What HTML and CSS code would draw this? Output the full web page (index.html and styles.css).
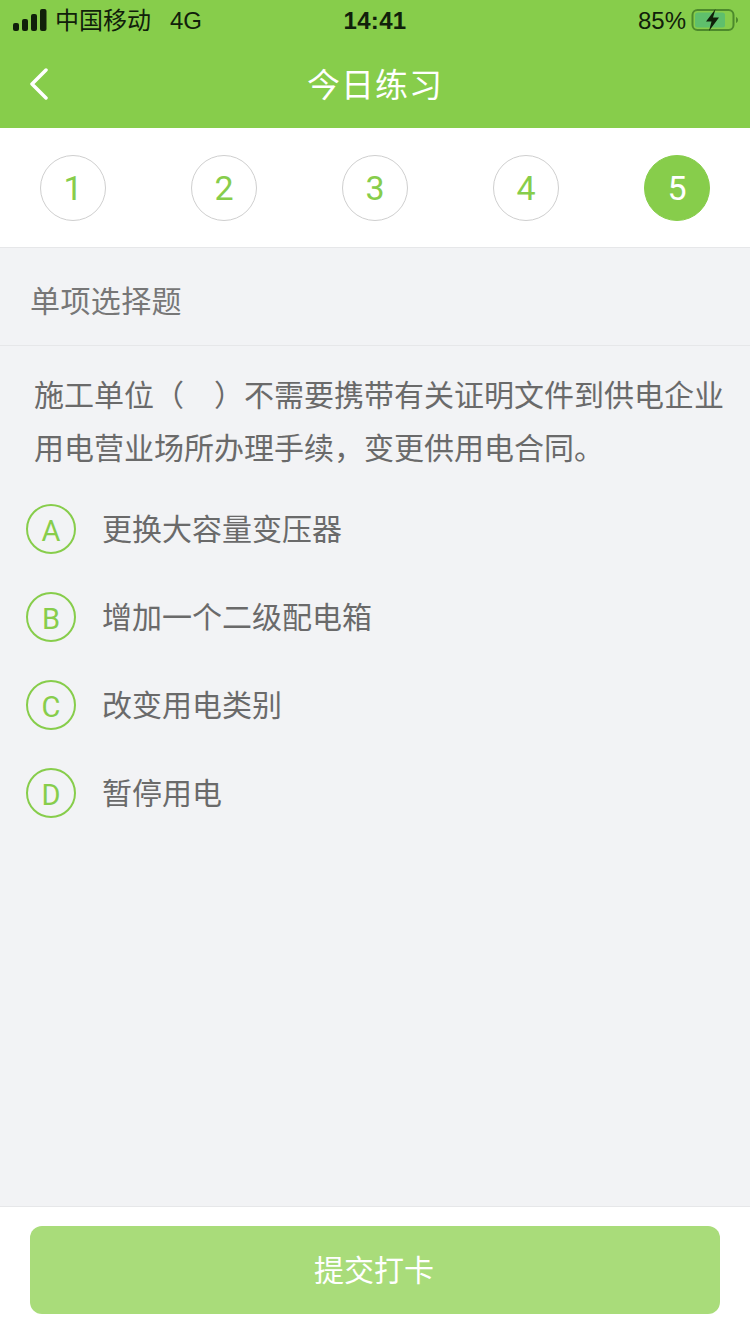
FILE: index.html
```html
<!DOCTYPE html>
<html lang="zh-CN">
<head>
    <meta charset="UTF-8">
    <meta name="viewport" content="width=device-width, initial-scale=1.0">
    <title>今日练习</title>
    <link rel="stylesheet" href="styles.css">
</head>
<body>
    <div class="page">
        <div class="status-bar">
            <div class="status-left">
                <svg class="signal" width="34" height="22" viewBox="0 0 34 22">
                    <rect x="0" y="14" width="6" height="8" rx="2"/>
                    <rect x="9" y="10" width="6" height="12" rx="2"/>
                    <rect x="18" y="5" width="6" height="17" rx="2"/>
                    <rect x="27" y="0" width="6.500" height="22" rx="2"/>
                </svg>
                <span class="carrier">中国移动</span>
                <span class="network">4G</span>
            </div>
            <div class="status-time">14:41</div>
            <div class="status-right">
                <span class="percent">85%</span>
                <svg class="battery" width="47" height="24" viewBox="0 0 47 24">
                    <rect x="1.500" y="2" width="41" height="20" rx="5" fill="none" stroke="#4d8a2c" stroke-width="2"/>
                    <rect x="4" y="4.500" width="30" height="15" rx="2.500" fill="#5fbf6c"/>
                    <path d="M45 9v6c1.300-.5 2-1.600 2-3s-.7-2.500-2-3z" fill="#4d8a2c"/>
                    <path d="M24.500 1 15 13.500h5.500L18 23l10-13.500h-6z" fill="#10200a"/>
                </svg>
            </div>
        </div>

        <div class="nav-bar">
            <svg class="back" width="20" height="32" viewBox="0 0 20 32">
                <path d="M17 2 3 16l14 14" fill="none" stroke="#fff" stroke-width="3.500" stroke-linecap="round" stroke-linejoin="round"/>
            </svg>
            <h1 class="nav-title">今日练习</h1>
        </div>

        <div class="steps">
            <div class="step">1</div>
            <div class="step">2</div>
            <div class="step">3</div>
            <div class="step">4</div>
            <div class="step active">5</div>
        </div>

        <div class="section-title">单项选择题</div>

        <div class="question">
            <p class="question-text">施工单位（&nbsp;&nbsp;&nbsp;）不需要携带有关证明文件到供电企业用电营业场所办理手续，变更供用电合同。</p>
            <ul class="options">
                <li class="option"><span class="option-mark">A</span><span class="option-text">更换大容量变压器</span></li>
                <li class="option"><span class="option-mark">B</span><span class="option-text">增加一个二级配电箱</span></li>
                <li class="option"><span class="option-mark">C</span><span class="option-text">改变用电类别</span></li>
                <li class="option"><span class="option-mark">D</span><span class="option-text">暂停用电</span></li>
            </ul>
        </div>

        <div class="footer">
            <button class="submit-btn" type="button">提交打卡</button>
        </div>
    </div>
</body>
</html>
```

FILE: styles.css
```css
* {
    box-sizing: border-box;
}

body {
    margin: 0;
    padding: 0;
    font-family: "Liberation Sans", "Noto Sans CJK SC", sans-serif;
    background-color: #f2f3f5;
}

.page {
    width: 750px;
    height: 1334px;
    display: flex;
    flex-direction: column;
    overflow: hidden;
}

.status-bar {
    height: 40px;
    padding: 1px 13px 0;
    display: grid;
    grid-template-columns: 1fr auto 1fr;
    align-items: center;
    background-color: #87cd4b;
    color: #10200a;
    font-size: 24px;
}

.status-left {
    display: flex;
    align-items: center;
}

.signal {
    fill: #10200a;
    margin-right: 8px;
    margin-top: -3px;
}

.carrier {
    padding-bottom: 5px;
}

.network {
    margin-left: 19px;
}

.status-time {
    font-weight: bold;
    letter-spacing: .3px;
}

.status-right {
    display: flex;
    align-items: center;
    justify-content: flex-end;
}

.percent {
    margin-left: -1px;
}

.battery {
    margin-left: 5px;
    margin-right: -1px;
    margin-top: -2px;
}

.nav-bar {
    position: relative;
    height: 88px;
    padding-bottom: 2px;
    display: flex;
    align-items: center;
    justify-content: center;
    background-color: #87cd4b;
}

.back {
    position: absolute;
    left: 29px;
    top: 28px;
}

.nav-title {
    margin: 0;
    color: #fff;
    font-size: 33px;
    font-weight: normal;
    letter-spacing: 1px;
}

.steps {
    height: 120px;
    padding: 27px 40px 0;
    display: flex;
    justify-content: space-between;
    align-items: flex-start;
    background-color: #fff;
    border-bottom: 1px solid #e6e7e9;
}

.step {
    width: 66px;
    height: 66px;
    display: flex;
    align-items: center;
    justify-content: center;
    border: 1px solid #cfcfcf;
    border-radius: 50%;
    color: #87cd4b;
    font-family: Roboto, sans-serif;
    font-size: 34px;
}

.step.active {
    background-color: #87cd4b;
    border-color: #87cd4b;
    color: #fff;
}

.section-title {
    height: 98px;
    padding: 4px 30px 0;
    display: flex;
    align-items: center;
    border-bottom: 1px solid #e6e7e9;
    color: #777;
    font-size: 30px;
    letter-spacing: .4px;
}

.question {
    flex: 1;
    padding-top: 23px;
}

.question-text {
    margin: 0;
    padding: 0 20px 0 34px;
    color: #6a6a6a;
    font-size: 30px;
    line-height: 53px;
    word-spacing: 1.700px;
}

.options {
    list-style-type: none;
    margin: 0;
    padding: 0 26px;
}

.option {
    height: 50px;
    display: flex;
    align-items: center;
    color: #6a6a6a;
    font-size: 30px;
}

.option:first-child {
    margin-top: 29px;
}

.option + .option {
    margin-top: 38px;
}

.option-mark {
    width: 50px;
    height: 50px;
    margin-right: 26px;
    padding-top: 3px;
    display: flex;
    align-items: center;
    justify-content: center;
    border: 2px solid #87cd4b;
    border-radius: 50%;
    color: #87cd4b;
    font-family: Roboto, sans-serif;
    font-size: 29px;
}

.option-text {
    padding-bottom: 4px;
}

.footer {
    height: 128px;
    padding: 19px 30px 0;
    background-color: #fff;
    border-top: 1px solid #e6e7e9;
}

.submit-btn {
    width: 100%;
    height: 88px;
    padding: 0 2px 4px 0;
    background-color: #a9dc7a;
    color: #fff;
    border: none;
    border-radius: 12px;
    font-family: inherit;
    font-size: 30px;
}
```
